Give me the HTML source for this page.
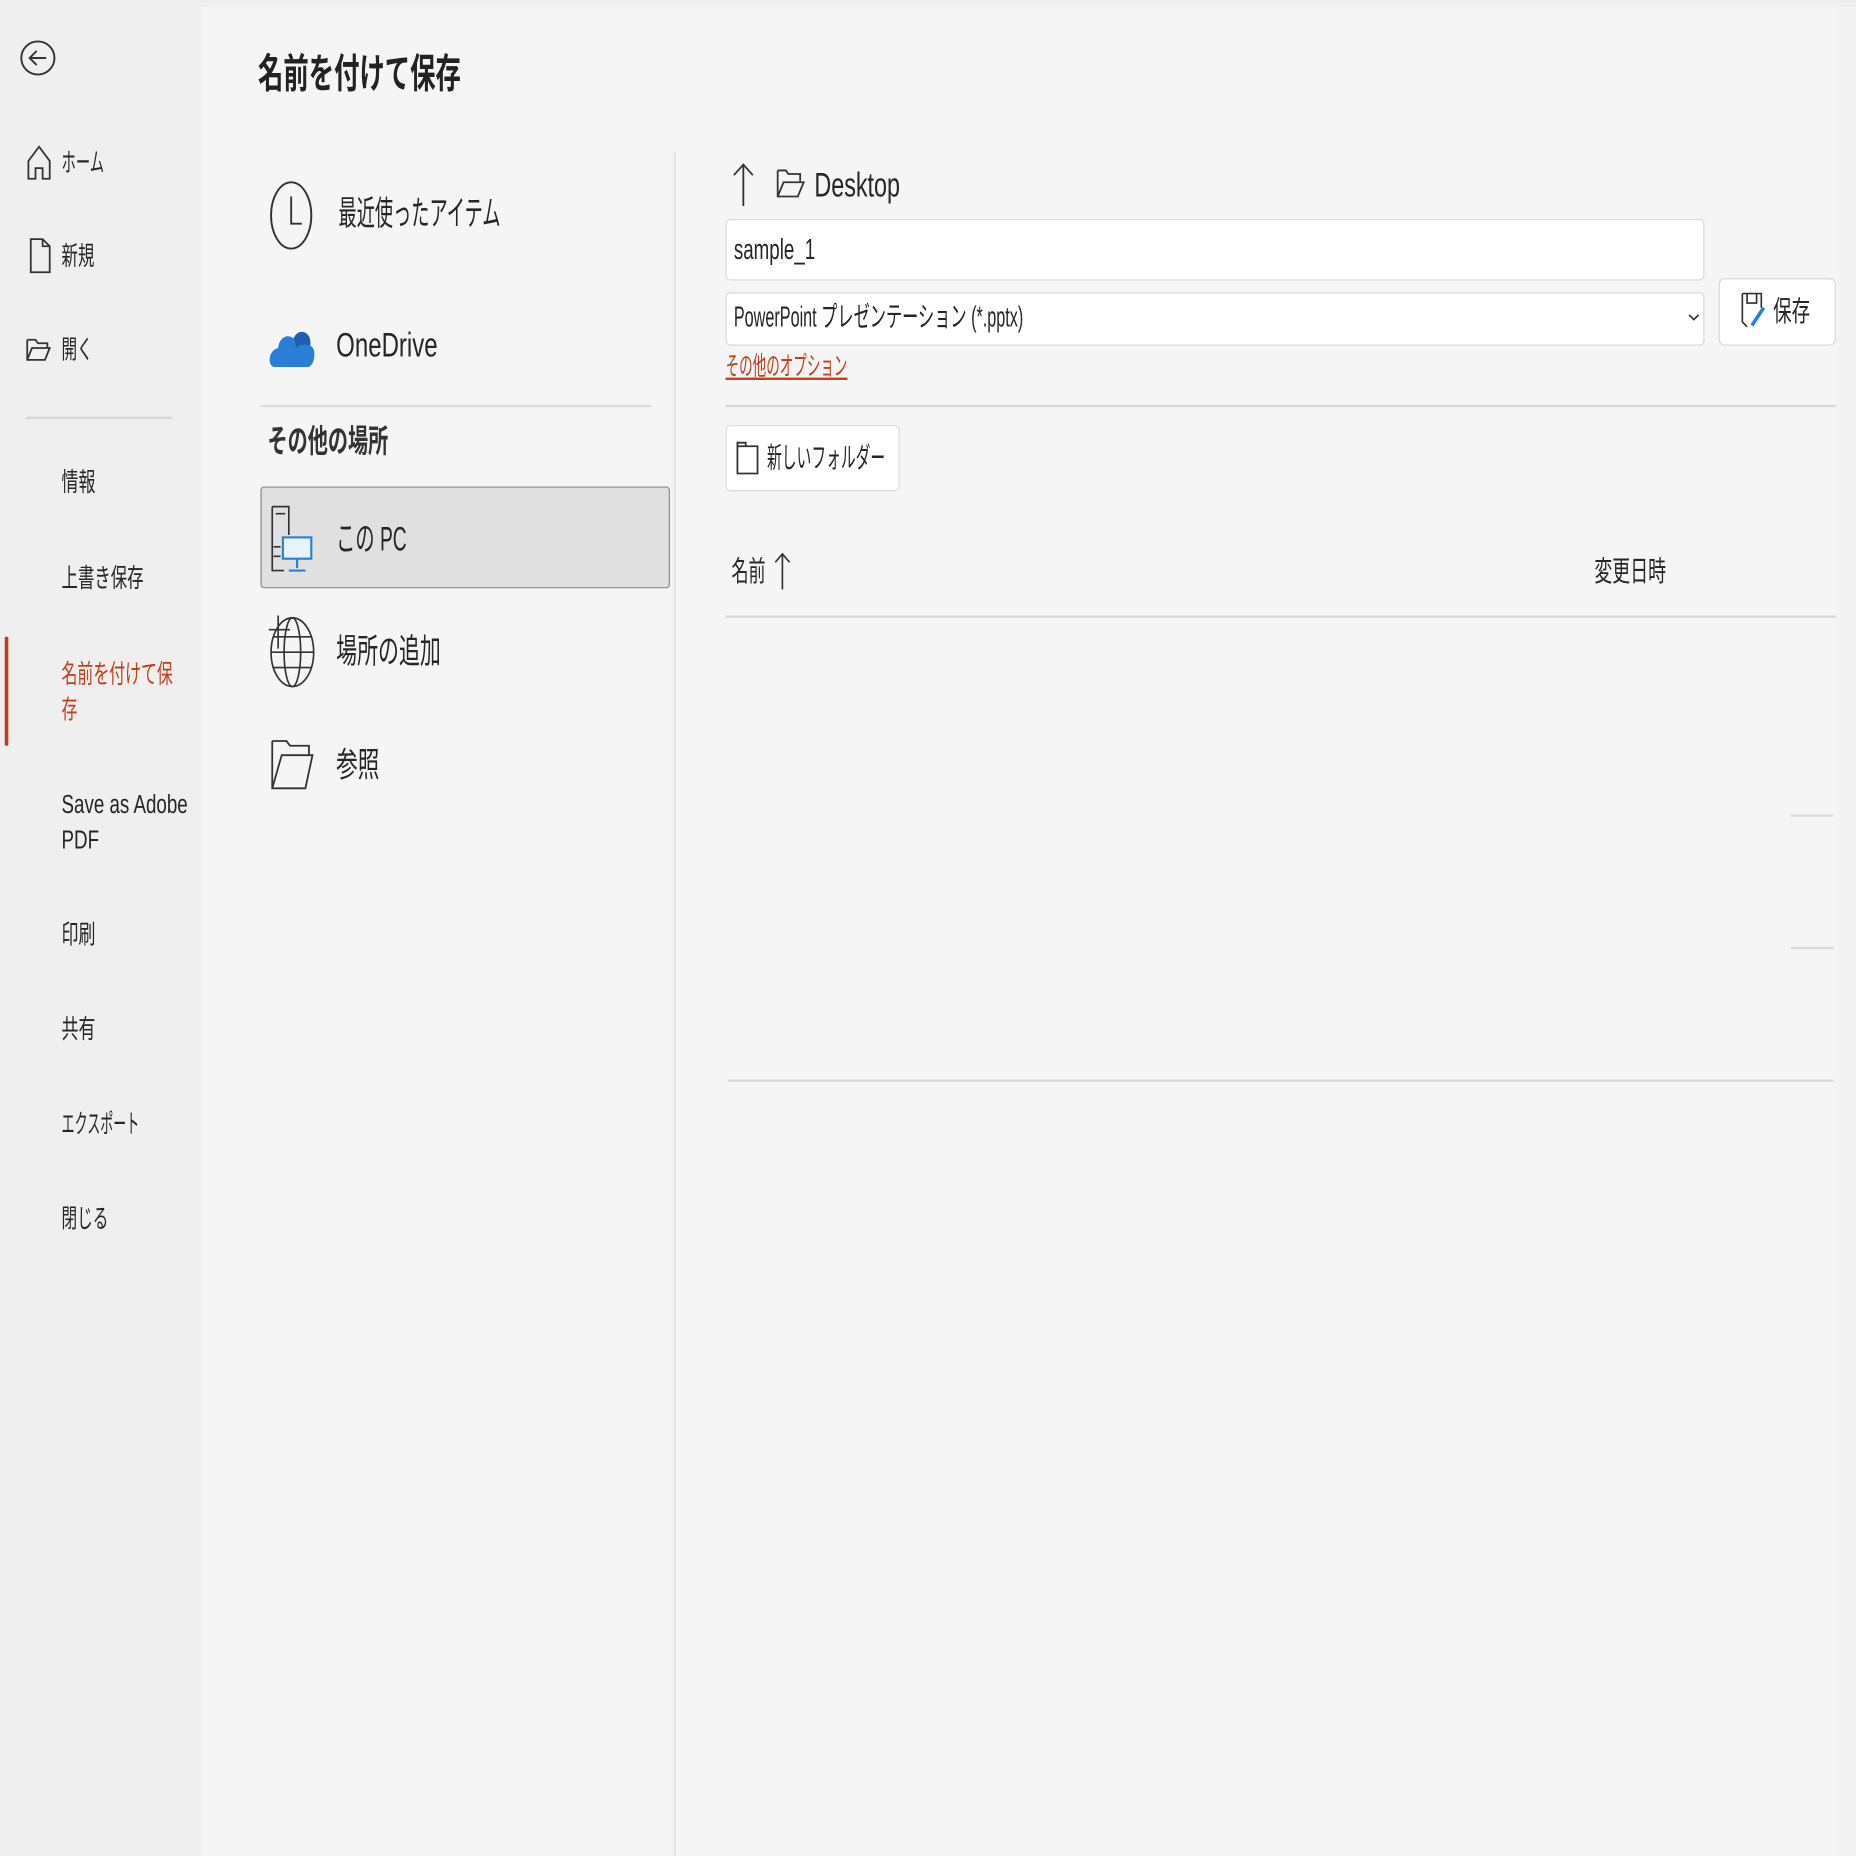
<!DOCTYPE html>
<html><head><meta charset="utf-8">
<style>
html,body{margin:0;padding:0;width:1856px;height:1856px;overflow:hidden;background:#efefef;}
#w{position:absolute;left:0;top:0;width:1568px;height:1568px;transform:scale(1.18367);transform-origin:0 0;font-family:"Liberation Sans","Noto Sans CJK JP",sans-serif;color:#262626;}
.t{position:absolute;white-space:nowrap;transform-origin:0 50%;transform:scaleX(.7);line-height:1;}
.b{font-weight:bold}
.abs{position:absolute}
svg{position:absolute;overflow:visible}
</style></head><body>
<div id="w">
  <div class="abs" style="left:0;top:0;width:170px;height:1568px;background:#efefef"></div>
  <div class="abs" style="left:170px;top:6px;width:1398px;height:1562px;background:#f5f5f5"></div>
  <div class="abs" style="left:1552px;top:6px;width:16px;height:1562px;background:#f3f3f3"></div>

  <svg style="left:14px;top:31px" width="36" height="36" viewBox="0 0 36 36" fill="none" stroke="#333" stroke-width="1.6"><circle cx="18" cy="18" r="14"/><path d="M25 18H11M17 12l-6 6 6 6"/></svg>

  <svg style="left:22px;top:122px" width="22" height="30" viewBox="0 0 22 30" fill="none" stroke="#333" stroke-width="1.5"><path d="M2 14L11 2l9 12v15h-6v-9H8v9H2z"/></svg>
  <div class="t" style="left:52px;top:127px;font-size:22px;transform:scaleX(.55)">ホーム</div>
  <svg style="left:25px;top:201px" width="18" height="30" viewBox="0 0 18 30" fill="none" stroke="#333" stroke-width="1.5"><path d="M1 1h10l6 6v22H1z M11 1v6h6"/></svg>
  <div class="t" style="left:52px;top:206px;font-size:22px;transform:scaleX(.63)">新規</div>
  <svg style="left:22px;top:285px" width="22" height="22" viewBox="0 0 22 22" fill="none" stroke="#333" stroke-width="1.5"><path d="M1 2h7l2 3h8v4 M1 2v17h15l4-10H5L1 19"/></svg>
  <div class="t" style="left:52px;top:285px;font-size:22px;transform:scaleX(.6)">開く</div>
  <div class="abs" style="left:22px;top:352px;width:123px;height:2px;background:#d6d6d6"></div>
  <div class="t" style="left:52px;top:397px;font-size:22px;transform:scaleX(.65)">情報</div>
  <div class="t" style="left:52px;top:478px;font-size:22px;transform:scaleX(.63)">上書き保存</div>
  <div class="abs" style="left:4px;top:538px;width:3px;height:92px;background:#c43e1c"></div>
  <div class="t" style="left:52px;top:559px;font-size:22px;color:#c43e1c;transform:scaleX(.61)">名前を付けて保</div>
  <div class="t" style="left:52px;top:589px;font-size:22px;color:#c43e1c;transform:scaleX(.61)">存</div>
  <div class="t" style="left:52px;top:669px;font-size:22px;transform:scaleX(.72)">Save as Adobe</div>
  <div class="t" style="left:52px;top:699px;font-size:22px;transform:scaleX(.72)">PDF</div>
  <div class="t" style="left:52px;top:779px;font-size:22px;transform:scaleX(.65)">印刷</div>
  <div class="t" style="left:52px;top:859px;font-size:22px;transform:scaleX(.65)">共有</div>
  <div class="t" style="left:52px;top:939px;font-size:22px;transform:scaleX(.5)">エクスポート</div>
  <div class="t" style="left:52px;top:1019px;font-size:22px;transform:scaleX(.6)">閉じる</div>

  <div class="t b" style="left:218px;top:46px;font-size:34px;color:#222;transform:scaleX(.63)">名前を付けて保存</div>

  <div class="abs" style="left:569px;top:128px;width:2px;height:1440px;background:#e4e4e4"></div>
  <svg style="left:228px;top:153px" width="38" height="58" viewBox="0 0 38 58" fill="none" stroke="#333" stroke-width="1.6"><ellipse cx="18" cy="29" rx="17" ry="28"/><path d="M18 13v23h9"/></svg>
  <div class="t" style="left:286px;top:167px;font-size:29px;transform:scaleX(.53)">最近使ったアイテム</div>
  <svg style="left:228px;top:270px" width="38" height="44" viewBox="0 0 38 44"><path d="M4 40 C-2 40 -2 26 7 24 C8 14 16 12 20 16 C24 6 36 10 34 22 C40 24 38 40 32 40Z" fill="#2a7fd4"/><path d="M20 16 C24 6 36 10 34 22 C28 20 24 22 22 24 C22 20 21 18 20 16Z" fill="#1f5fb0"/></svg>
  <div class="t" style="left:284px;top:278px;font-size:29px">OneDrive</div>
  <div class="abs" style="left:220px;top:342px;width:330px;height:2px;background:#dcdcdc"></div>
  <div class="t b" style="left:226px;top:360px;font-size:27px;color:#333;transform:scaleX(.63)">その他の場所</div>
  <div class="abs" style="left:220px;top:411px;width:344px;height:84px;background:#e0e0e0;border:1.5px solid #8a8a8a;border-radius:3px"></div>
  <svg style="left:228px;top:424px" width="38" height="64" viewBox="0 0 38 64" fill="none" stroke="#333" stroke-width="1.4"><path d="M2 4h14v24 M2 4v54h10 M5 10h8 M3 38h6 M3 46h6"/><rect x="11" y="30" width="24" height="18" stroke="#2a7fd4" fill="#e8f2fb" stroke-width="1.8"/><path d="M23 48v8M16 58h14" stroke="#2a7fd4" stroke-width="1.8"/></svg>
  <div class="t" style="left:284px;top:442px;font-size:29px;transform:scaleX(.56)">この PC</div>
  <svg style="left:226px;top:518px" width="42" height="64" viewBox="0 0 42 64" fill="none" stroke="#333" stroke-width="1.4"><ellipse cx="21" cy="33" rx="18" ry="29"/><ellipse cx="21" cy="33" rx="7" ry="29"/><path d="M3 33h36 M5 20h32 M5 46h32 M9 2v28 M1 14h18"/></svg>
  <div class="t" style="left:284px;top:537px;font-size:29px;transform:scaleX(.61)">場所の追加</div>
  <svg style="left:228px;top:624px" width="40" height="44" viewBox="0 0 40 44" fill="none" stroke="#333" stroke-width="1.5"><path d="M2 2h12l3 4h16v8 M2 2v40h28l6-28H10L2 42"/></svg>
  <div class="t" style="left:284px;top:633px;font-size:29px;transform:scaleX(.63)">参照</div>

  <svg style="left:618px;top:137px" width="20" height="38" viewBox="0 0 20 38" fill="none" stroke="#333" stroke-width="1.5"><path d="M10 37V2M2 11l8-9 8 9"/></svg>
  <svg style="left:656px;top:142px" width="24" height="26" viewBox="0 0 24 26" fill="none" stroke="#333" stroke-width="1.5"><path d="M1 2h7l2 3h10v6 M1 2v22h17l5-12H6L1 24"/></svg>
  <div class="t" style="left:688px;top:143px;font-size:29px;transform:scaleX(.68)">Desktop</div>

  <div class="abs" style="left:613px;top:185px;width:825px;height:50px;background:#fff;border:1.5px solid #d8d8d8;border-radius:4px"></div>
  <div class="t" style="left:620px;top:200px;font-size:24px;transform:scaleX(.66)">sample_1</div>
  <div class="abs" style="left:613px;top:247px;width:825px;height:43px;background:#fff;border:1.5px solid #d8d8d8;border-radius:4px"></div>
  <div class="t" style="left:620px;top:257px;font-size:24px;transform:scaleX(.57)">PowerPoint プレゼンテーション (*.pptx)</div>
  <svg style="left:1426px;top:264px" width="10" height="8" viewBox="0 0 10 8" fill="none" stroke="#333" stroke-width="1.4"><path d="M1 2l4 4 4-4"/></svg>
  <div class="abs" style="left:1452px;top:235px;width:97px;height:55px;background:#fff;border:1.5px solid #d8d8d8;border-radius:5px"></div>
  <svg style="left:1470px;top:246px" width="24" height="32" viewBox="0 0 24 32" fill="none" stroke="#333" stroke-width="1.4"><path d="M2 2h16v12 M2 2v24l4 4 M6 2v8h8V2"/><path d="M20 14L10 29" stroke="#2a7fd4" stroke-width="3"/></svg>
  <div class="t" style="left:1498px;top:252px;font-size:24px;transform:scaleX(.65)">保存</div>
  <div class="t" style="left:613px;top:299px;font-size:22px;color:#c43e1c;text-decoration:underline;transform:scaleX(.52)">その他のオプション</div>
  <div class="abs" style="left:613px;top:342px;width:938px;height:2px;background:#d8d8d8"></div>
  <div class="abs" style="left:613px;top:359px;width:145px;height:54px;background:#fff;border:1.5px solid #dcdcdc;border-radius:4px"></div>
  <svg style="left:622px;top:372px" width="20" height="30" viewBox="0 0 20 30" fill="none" stroke="#333" stroke-width="1.5"><path d="M1 2h7v3h10v23H1z M1 5h7"/></svg>
  <div class="t" style="left:648px;top:376px;font-size:24px;transform:scaleX(.52)">新しいフォルダー</div>
  <div class="t" style="left:618px;top:472px;font-size:24px;transform:scaleX(.6)">名前</div>
  <svg style="left:654px;top:466px" width="14" height="32" viewBox="0 0 14 32" fill="none" stroke="#333" stroke-width="1.4"><path d="M7 32V2M1 9l6-7 6 7"/></svg>
  <div class="t" style="left:1347px;top:472px;font-size:24px;transform:scaleX(.63)">変更日時</div>
  <div class="abs" style="left:613px;top:520px;width:938px;height:2px;background:#d8d8d8"></div>
  <div class="abs" style="left:1513px;top:688px;width:36px;height:2px;background:#dcdcdc"></div>
  <div class="abs" style="left:1513px;top:800px;width:36px;height:2px;background:#dcdcdc"></div>
  <div class="abs" style="left:615px;top:912px;width:934px;height:2px;background:#d8d8d8"></div>
</div>
</body></html>
